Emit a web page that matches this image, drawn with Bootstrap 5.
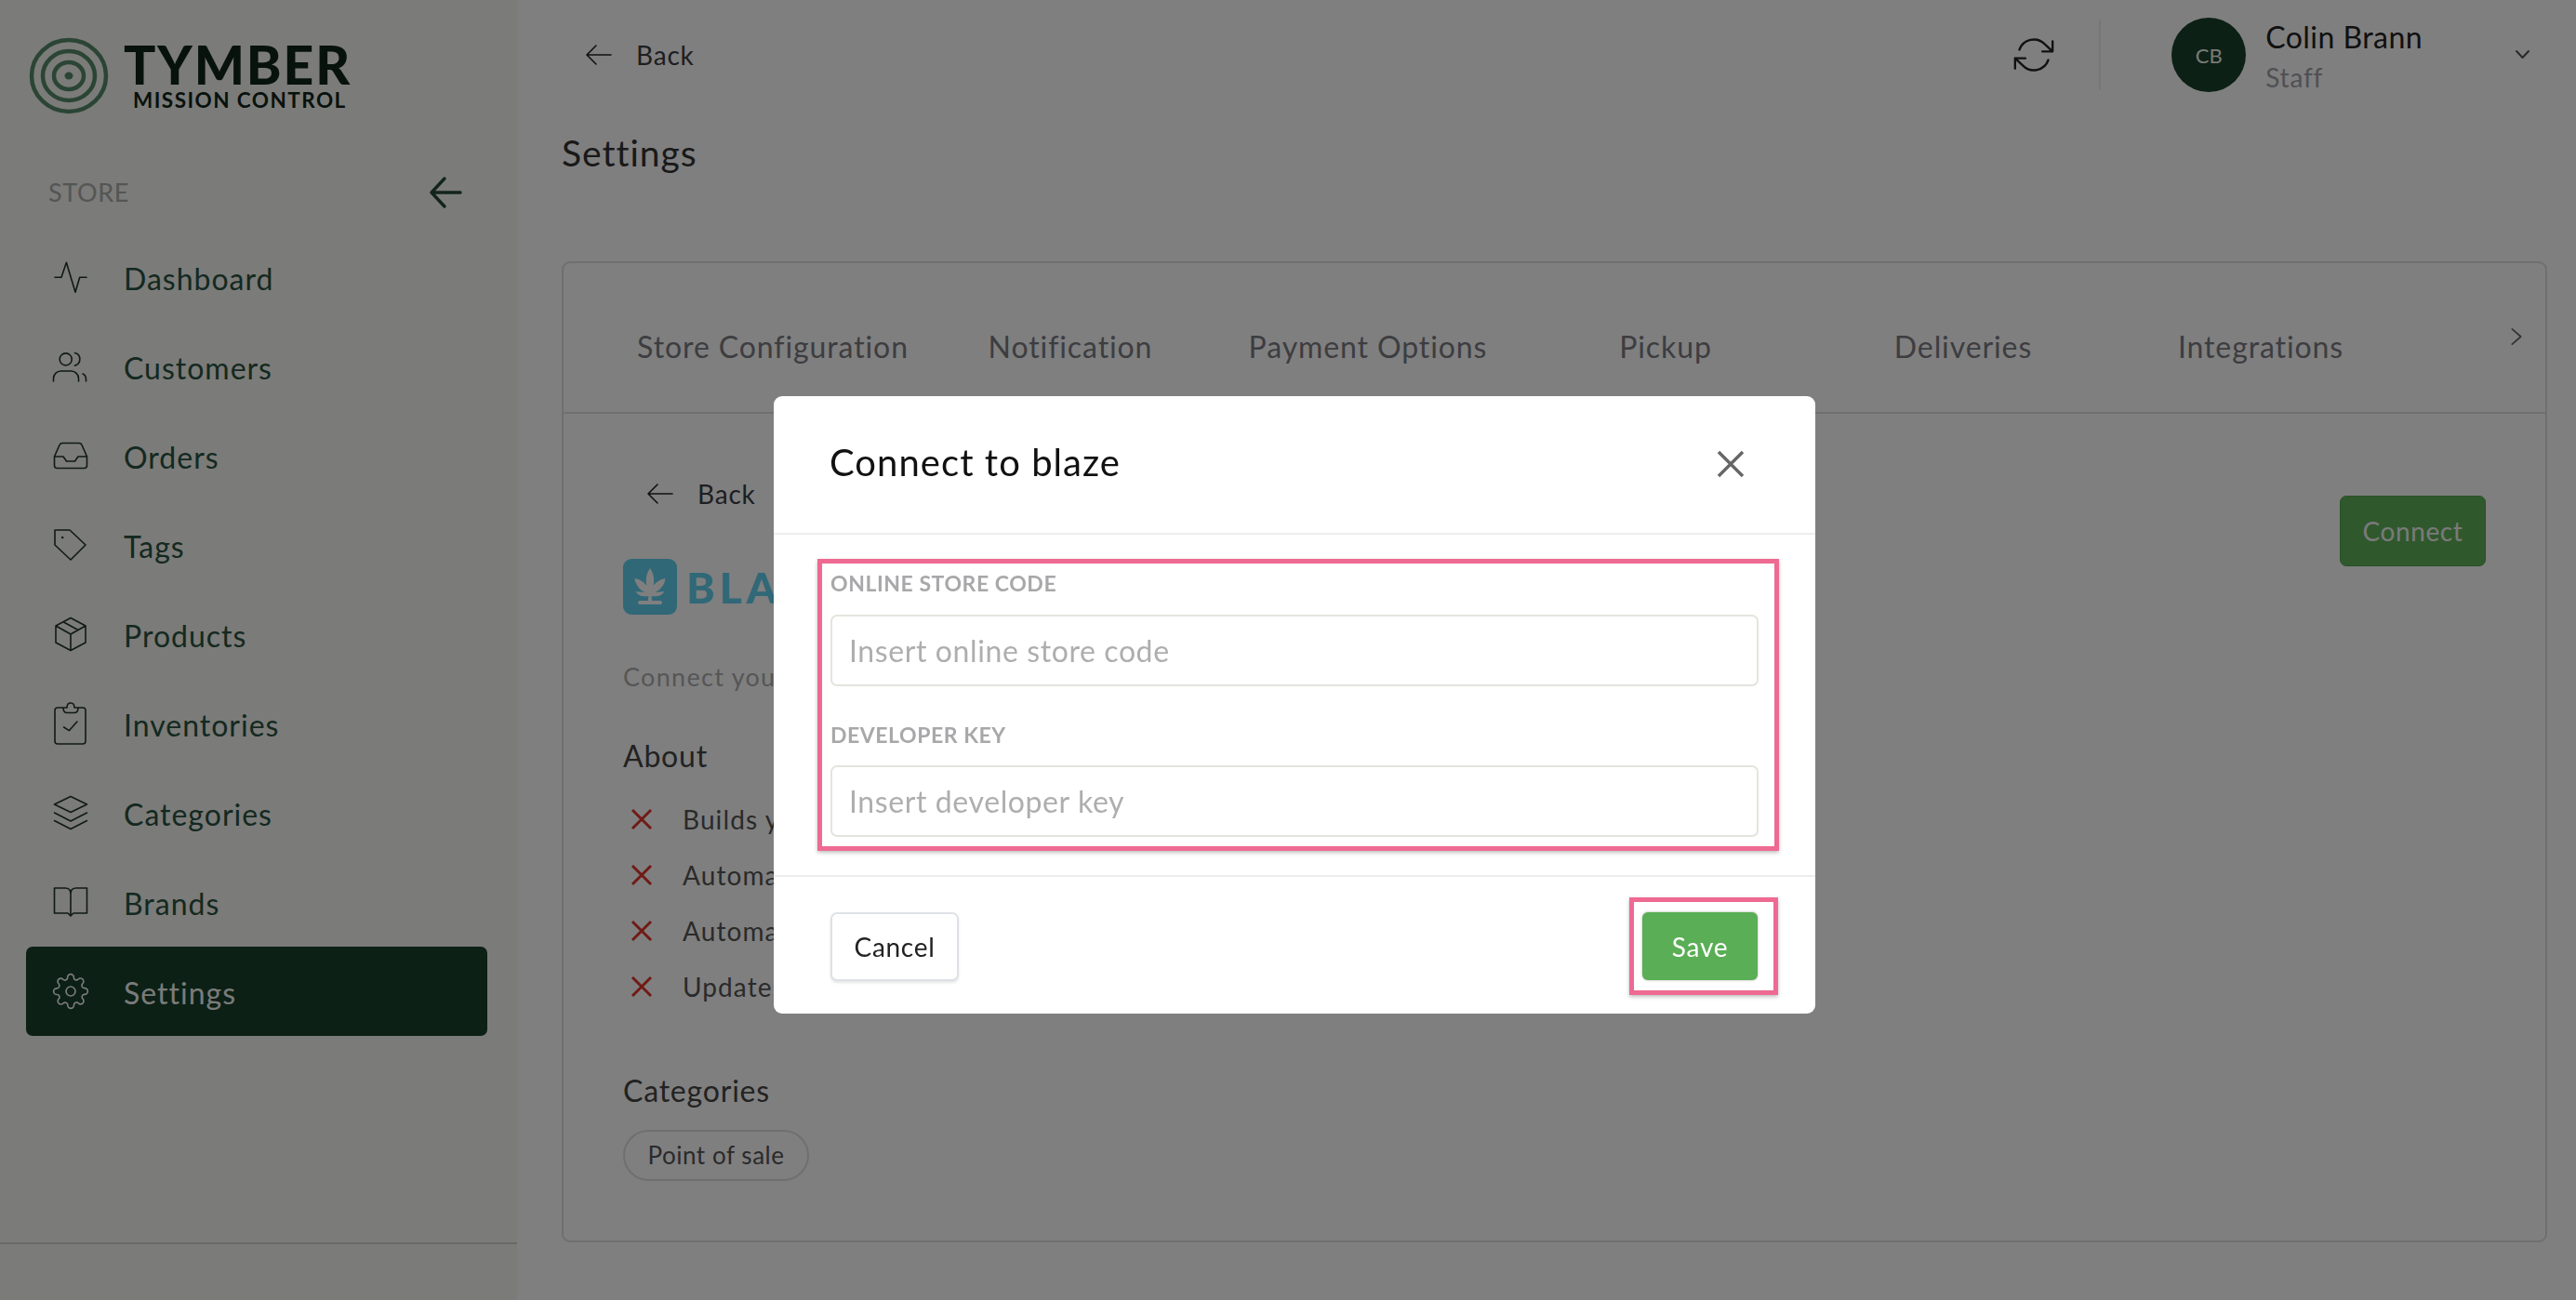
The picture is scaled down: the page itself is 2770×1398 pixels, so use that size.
<!doctype html>
<html lang="en">
<head>
<meta charset="utf-8">
<title>Settings</title>
<link href="https://cdn.jsdelivr.net/npm/bootstrap@5.3.0/dist/css/bootstrap.min.css" rel="stylesheet">
<style>
html,body{height:100%;overflow:hidden}
body{font-family:Lato,"Noto Sans",sans-serif;background:#fff;color:#444;font-size:28px}
svg{display:block;overflow:visible;fill:none;stroke:currentColor;stroke-linecap:round;stroke-linejoin:round}
.app-shell{height:1398px}
.side-panel{width:556px;background:#f6f6f3;flex:none;height:1398px;position:relative;border-right:0}
.logo-row{height:177px;padding:40px 0 0 32px;gap:17px}
.logo-words{color:#102419;font-weight:900;line-height:1}
.logo-big{font-size:57px;letter-spacing:1.9px;height:50px;line-height:50px;margin-top:4px}
.logo-small{font-size:22.5px;font-weight:700;letter-spacing:1.45px;margin:3px 0 0 10px}
.store-row{height:60px;margin-bottom:13px;padding:0 59px 0 52px;color:#aaaaa8;font-size:27px;letter-spacing:.6px}
.store-row svg{color:#244a3a}
.side-list{padding:0 32px 0 28px}
.side-link{height:96px;padding-left:28px;color:#285240;font-size:32px;letter-spacing:1px;text-decoration:none;border-radius:7px;gap:37px}
.side-link svg{color:#20342a;stroke-width:1.6;width:40px;height:40px;flex:none}
.link-text{padding-top:3px}
.side-link.is-active{background:#18402a;color:#f4f6f5}
.side-link.is-active svg{color:#f4f6f5}
.side-foot{position:absolute;left:0;right:0;top:1336px;border-top:2px solid #d5d5d3}
.work-area{padding:0 31px 0 48px;min-width:0}
.top-row{height:118px;color:#3c3c44}
.back-link{gap:24px;color:#3c3c44;font-size:28px;letter-spacing:.8px}
.back-link svg{width:32px;height:32px;stroke-width:1.6;color:#222}
.top-back{padding-left:24px}
.top-sync{width:44px;height:44px;color:#222;stroke-width:1.3}
.top-sep{width:2px;height:76px;background:#ececec;margin:0 76px 0 48px}
.user-dot{width:80px;height:80px;border-radius:50%;background:#18402a;color:#f0f4f1;font-size:22px}
.user-text{padding-top:3px}
.user-name{font-size:32px;color:#222;letter-spacing:.45px;line-height:40px}
.user-role{font-size:28px;color:#a0a0a8;letter-spacing:.8px;line-height:38px;padding-top:4px}
.user-box{gap:21px;margin-right:100px}
.top-caret{color:#555;margin-right:19px}
.page-head{font-size:39px;color:#333;font-weight:400;margin:22px 0 93px;line-height:48px;letter-spacing:1px}
.main-card{border:2px solid #dedede;border-radius:9px;height:1055px;background:#fff}
.tab-strip{height:162px;border-bottom:2px solid #dedede;padding:20px 0 0 65px;position:relative}
.tab-item{width:320px;text-align:center;color:#7a7a82;font-size:32px;letter-spacing:.9px;white-space:nowrap}
.tab-next{position:absolute;right:24px;top:68px;width:14px;height:22px;color:#66666c;stroke-width:3}
.card-inner{padding:62px 64px 0 64px}
.inner-back{padding-left:24px;height:48px}
.brand-row{margin-top:46px;gap:10px;height:60px;color:#60d0ee}
.brand-tile{width:58px;height:60px;border-radius:9px;background:#60d0ee;flex:none}
.brand-word{font-size:46px;font-weight:900;letter-spacing:5px}
.intro-line{margin-top:47px;line-height:40px;color:#acacac;font-size:27px;letter-spacing:1.3px;white-space:nowrap}
.sub-head{font-size:32px;line-height:44px;color:#444;letter-spacing:.8px;font-weight:400;margin:0}
.feat-list{margin-top:16px}
.feat-row{height:60px;gap:33px;font-size:28px;color:#555;letter-spacing:1.1px;white-space:nowrap}
.feat-row svg{width:22px;height:22px;margin-left:9px;color:#e0352b;stroke-width:3;stroke-linecap:butt}
.pill-tag{margin-top:20px;width:200px;height:55px;border:2px solid #dedede;border-radius:28px;font-size:26px;color:#555;letter-spacing:.55px}
.connect-btn{width:157px;height:76px;margin-top:26px;background:#5eb259;border:1px solid #55a550;color:#f4f4f4;font-size:28px;letter-spacing:.6px;border-radius:7px}
.dialog-wrap{max-width:1120px;width:1120px;margin:426px 0 0 832px}
.dialog-wrap .modal-content{border:0;border-radius:9px;height:664px}
.dialog-wrap .modal-header{height:149px;padding:0 77px 6px 60px;border-bottom:2px solid #ededf0;flex:none;justify-content:space-between}
.dialog-title{font-size:40px;color:#111;letter-spacing:1.05px;line-height:48px;font-weight:400}
.close-x{background:none;border:0;padding:0;margin-top:4px;color:#666;width:28px;height:28px}
.close-x svg{width:28px;height:28px;stroke-width:3.4;stroke-linecap:butt}
.dialog-wrap .modal-body{padding:26px 39px 26px 47px;flex:none}
.mark-box{border:5px solid #ee6a92;box-shadow:0 2px 4px rgba(0,0,0,.25)}
.field-stack{padding:7px 17px 10px 9px}
.field-label{display:block;font-size:23px;font-weight:700;color:#a8a8aa;line-height:28px;margin:0 0 20px;letter-spacing:.55px}
.field-label.second{margin-top:38px;margin-bottom:19px}
.field-input{height:77px;border:2px solid #e4e4de;border-radius:7px;font-size:32px;padding:0 18px;letter-spacing:.6px;color:#333}
.field-input::placeholder{color:#aeaeae}
.dialog-wrap .modal-footer{padding:22px 40px 22px 61px;border-top:2px solid #ededf0;justify-content:space-between;flex-wrap:nowrap}
.dialog-wrap .modal-footer>*{margin:0}
.cancel-btn{width:138px;height:74px;border:2px solid #dfe1e8;border-radius:7px;background:#fff;color:#222;font-size:28px;letter-spacing:.7px;box-shadow:0 2px 3px rgba(0,0,0,.1);padding:0}
.save-wrap{padding:11px 17px 11px 9px}
.save-btn{width:124px;height:73px;border:0;border-radius:6px;background:#5aae55;color:#fff;font-size:28px;letter-spacing:.7px;box-shadow:0 0 3px rgba(0,0,0,.3);padding:0;display:block}
</style>
</head>
<body>
<div class="app-shell d-flex">
  <aside class="side-panel">
    <div class="logo-row d-flex">
      <svg width="84" height="84" viewBox="0 0 84 84" style="color:#568a6a" stroke-width="4.5">
        <ellipse cx="42" cy="41.5" rx="40" ry="38.5"/><ellipse cx="42" cy="41.5" rx="28" ry="26.5"/><ellipse cx="42" cy="41.5" rx="16" ry="14.5"/><ellipse cx="42" cy="41.5" rx="4.5" ry="4" fill="currentColor" stroke="none"/>
      </svg>
      <div class="logo-words"><div class="logo-big">TYMBER</div><div class="logo-small">MISSION CONTROL</div></div>
    </div>
    <div class="store-row d-flex align-items-center justify-content-between">
      <span>STORE</span>
      <svg width="36" height="36" viewBox="0 0 36 36" stroke-width="3.4"><path d="M34 18H3M17 3L3 18l14 15"/></svg>
    </div>
    <nav class="side-list nav flex-column">
      <a class="side-link d-flex align-items-center" href="#"><svg viewBox="0 0 40 40"><path d="M3 20.2h7l5.4-16L25 36.300l4.700-16.100H37"/></svg><span class="link-text">Dashboard</span></a>
      <a class="side-link d-flex align-items-center" href="#"><svg viewBox="0 0 40 40"><circle cx="14.700" cy="12.400" r="6.500"/><path d="M1.500 36v-3a8 8 0 0 1 8-8h11a8 8 0 0 1 8 8v3M24.500 5.500a7 7 0 0 1 0 13.600M36.500 36v-2c0-3-1-5-3.500-6"/></svg><span class="link-text">Customers</span></a>
      <a class="side-link d-flex align-items-center" href="#"><svg viewBox="0 0 40 40"><path d="M2.500 21L8 8.500Q9 6.500 11 6.500H29Q31 6.500 32 8.500L37.500 21V30.500Q37.500 33.500 34.500 33.500H5.500Q2.500 33.500 2.500 30.500ZM2.500 21H12L15.500 26H24.500L28 21H37.500"/></svg><span class="link-text">Orders</span></a>
      <a class="side-link d-flex align-items-center" href="#"><svg viewBox="0 0 40 40"><path d="M3 4H19L36 20 20 36 3 20Z"/><circle cx="11.200" cy="12" r=".5"/></svg><span class="link-text">Tags</span></a>
      <a class="side-link d-flex align-items-center" href="#"><svg viewBox="0 0 40 40"><path d="M20 2.500L36 11V29L20 37.500 4 29V11ZM4 11L20 20 36 11M20 20V37.500M12 6.800L28 15.500"/></svg><span class="link-text">Products</span></a>
      <a class="side-link d-flex align-items-center" href="#"><svg viewBox="0 0 40 40"><path d="M12 3H6Q3 3 3 6V39Q3 42 6 42H33Q36 42 36 39V6Q36 3 33 3H28M12 3Q12 8.500 16 8.500H24Q28 8.500 28 3H24Q24 -2 20 -2T16 3ZM12.600 24L18.300 27.700 26.900 18"/></svg><span class="link-text">Inventories</span></a>
      <a class="side-link d-flex align-items-center" href="#"><svg viewBox="0 0 40 40"><path d="M20 2.500L37.500 11 20 19.500 2.500 11ZM2.500 20L20 29 37.500 20M2.500 28.500L20 37.500 37.500 28.500"/></svg><span class="link-text">Categories</span></a>
      <a class="side-link d-flex align-items-center" href="#"><svg viewBox="0 0 40 40"><path d="M2.500 5V32H17L20 35 23 32H37.500V5H26Q20 5 20 11V33M20 11Q20 5 14 5H2.500"/></svg><span class="link-text">Brands</span></a>
      <a class="side-link is-active d-flex align-items-center" href="#"><svg viewBox="0 0 24 24" style="stroke-width:1"><circle cx="12" cy="12" r="3"/><path d="M19.400 15a1.650 1.650 0 0 0 .33 1.820l.06.06a2 2 0 0 1 0 2.830 2 2 0 0 1-2.830 0l-.06-.06a1.650 1.650 0 0 0-1.820-.33 1.650 1.650 0 0 0-1 1.510V21a2 2 0 0 1-2 2 2 2 0 0 1-2-2v-.09A1.650 1.650 0 0 0 9 19.400a1.650 1.650 0 0 0-1.820.33l-.06.06a2 2 0 0 1-2.830 0 2 2 0 0 1 0-2.830l.06-.06a1.650 1.650 0 0 0 .33-1.820 1.650 1.650 0 0 0-1.510-1H3a2 2 0 0 1-2-2 2 2 0 0 1 2-2h.09A1.650 1.650 0 0 0 4.600 9a1.650 1.650 0 0 0-.33-1.820l-.06-.06a2 2 0 0 1 0-2.830 2 2 0 0 1 2.830 0l.06.06a1.650 1.650 0 0 0 1.820.33H9a1.650 1.650 0 0 0 1-1.510V3a2 2 0 0 1 2-2 2 2 0 0 1 2 2v.09a1.650 1.650 0 0 0 1 1.510 1.650 1.650 0 0 0 1.820-.33l.06-.06a2 2 0 0 1 2.830 0 2 2 0 0 1 0 2.830l-.06.06a1.650 1.650 0 0 0-.33 1.820V9a1.650 1.650 0 0 0 1.510 1H21a2 2 0 0 1 2 2 2 2 0 0 1-2 2h-.09a1.650 1.650 0 0 0-1.510 1z"/></svg><span class="link-text">Settings</span></a>
    </nav>
    <div class="side-foot"></div>
  </aside>
  <main class="work-area flex-grow-1">
    <div class="top-row d-flex align-items-center">
      <div class="back-link top-back d-flex align-items-center"><svg viewBox="0 0 32 32"><path d="M29 16H3M13 6L3 16l10 10"/></svg><span>Back</span></div>
      <div class="ms-auto d-flex align-items-center">
        <svg class="top-sync" viewBox="0 0 24 24"><path d="M23 4v6h-6M1 20v-6h6M3.510 9a9 9 0 0 1 14.850-3.360L23 10M1 14l4.640 4.360A9 9 0 0 0 20.490 15"/></svg>
        <div class="top-sep"></div>
        <div class="user-box d-flex align-items-center">
          <div class="user-dot d-flex align-items-center justify-content-center">CB</div>
          <div class="user-text"><div class="user-name">Colin Brann</div><div class="user-role">Staff</div></div>
        </div>
        <svg class="top-caret" width="15" height="10" viewBox="0 0 15 10" stroke-width="2"><path d="M1 1l6.500 7L14 1"/></svg>
      </div>
    </div>
    <h1 class="page-head">Settings</h1>
    <section class="main-card">
      <div class="tab-strip d-flex align-items-center">
        <div class="tab-item">Store Configuration</div>
        <div class="tab-item">Notification</div>
        <div class="tab-item">Payment Options</div>
        <div class="tab-item">Pickup</div>
        <div class="tab-item">Deliveries</div>
        <div class="tab-item">Integrations</div>
        <svg class="tab-next" viewBox="0 0 24 36"><path d="M4 4l16 14L4 32"/></svg>
      </div>
      <div class="card-inner d-flex justify-content-between">
        <div>
          <div class="back-link inner-back d-flex align-items-center"><svg viewBox="0 0 32 32"><path d="M29 16H3M13 6L3 16l10 10"/></svg><span>Back</span></div>
          <div class="brand-row d-flex align-items-center">
            <div class="brand-tile d-flex align-items-center justify-content-center">
              <svg width="44" height="44" viewBox="0 0 44 44" style="fill:#fff;stroke:none"><path d="M22 2c4 6 5 12 3.500 19 3-4 7-7 13-8-1 7-5 12-11 15l10-1c-3 5-9 6-14 5l1 6h-5l1-6c-5 1-11 0-14-5l10 1C10.500 25 6.500 20 5.500 13c6 1 10 4 13 8C17 14 18 8 22 2z"/><rect x="9" y="37" width="26" height="4" rx="2"/></svg>
            </div>
            <div class="brand-word">BLAZE</div>
          </div>
          <div class="intro-line">Connect your</div>
          <h2 class="sub-head" style="margin-top:43px">About</h2>
          <div class="feat-list">
            <div class="feat-row d-flex align-items-center"><svg viewBox="0 0 22 22"><path d="M1 1l20 20M21 1L1 21"/></svg>Builds your</div>
            <div class="feat-row d-flex align-items-center"><svg viewBox="0 0 22 22"><path d="M1 1l20 20M21 1L1 21"/></svg>Automatically</div>
            <div class="feat-row d-flex align-items-center"><svg viewBox="0 0 22 22"><path d="M1 1l20 20M21 1L1 21"/></svg>Automatically</div>
            <div class="feat-row d-flex align-items-center"><svg viewBox="0 0 22 22"><path d="M1 1l20 20M21 1L1 21"/></svg>Updates</div>
          </div>
          <h2 class="sub-head" style="margin-top:60px">Categories</h2>
          <div class="pill-tag d-flex align-items-center justify-content-center">Point of sale</div>
        </div>
        <button class="btn connect-btn p-0 align-self-start" type="button">Connect</button>
      </div>
    </section>
  </main>
</div>
<div class="modal-backdrop show"></div>
<div class="modal show d-block" tabindex="-1">
  <div class="modal-dialog dialog-wrap">
    <div class="modal-content">
      <div class="modal-header">
        <div class="dialog-title">Connect to blaze</div>
        <button class="close-x" type="button" aria-label="Close"><svg viewBox="0 0 28 28"><path d="M1 1l26 26M27 1L1 27"/></svg></button>
      </div>
      <div class="modal-body">
        <div class="mark-box field-stack">
          <label class="field-label">ONLINE STORE CODE</label>
          <input class="form-control field-input" placeholder="Insert online store code">
          <label class="field-label second">DEVELOPER KEY</label>
          <input class="form-control field-input" placeholder="Insert developer key">
        </div>
      </div>
      <div class="modal-footer">
        <button class="cancel-btn" type="button">Cancel</button>
        <div class="mark-box save-wrap"><button class="save-btn" type="button">Save</button></div>
      </div>
    </div>
  </div>
</div>
<script src="https://cdn.jsdelivr.net/npm/bootstrap@5.3.0/dist/js/bootstrap.bundle.min.js"></script>
</body>
</html>
